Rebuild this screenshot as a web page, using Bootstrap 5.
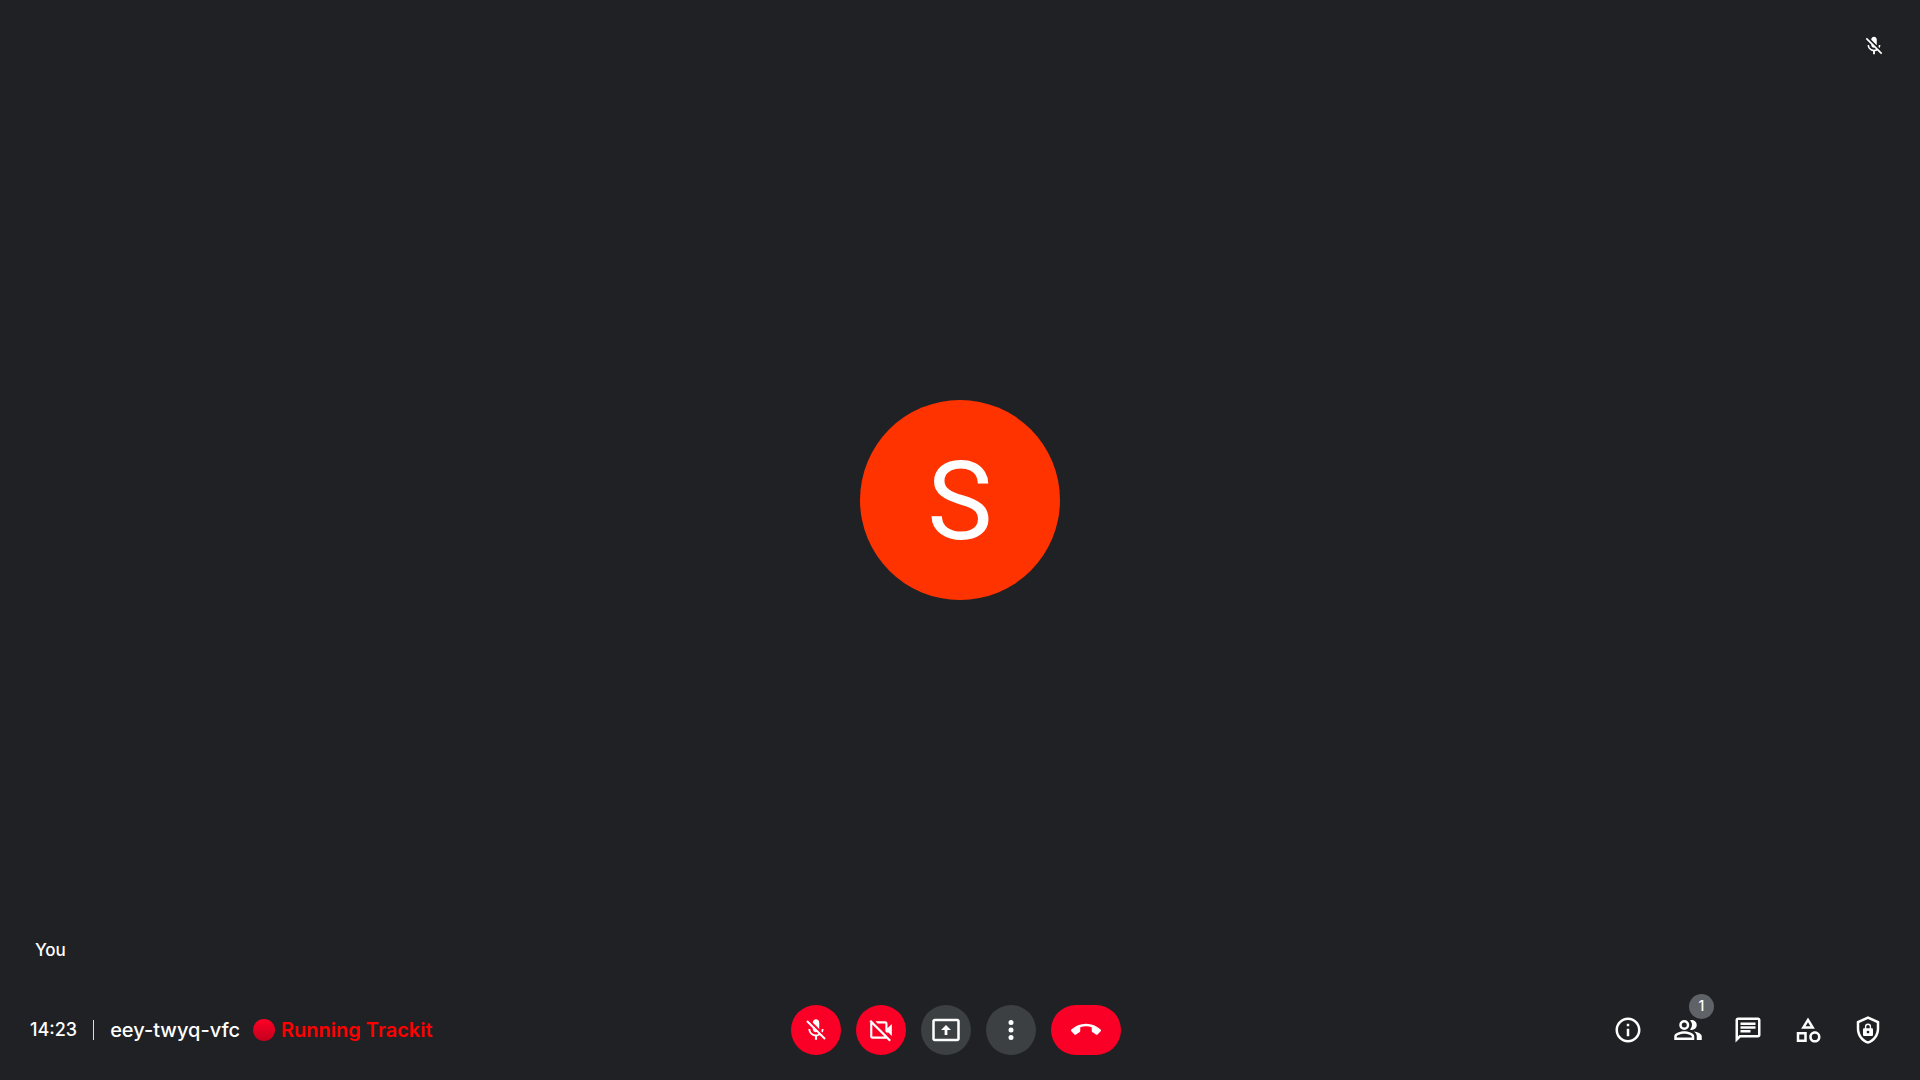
<!DOCTYPE html>
<html lang="en">
<head>
<meta charset="utf-8">
<meta name="viewport" content="width=device-width, initial-scale=1">
<title>Meeting eey-twyq-vfc</title>
<link rel="stylesheet" href="https://cdn.jsdelivr.net/npm/bootstrap@5.3.0/dist/css/bootstrap.min.css">
<style>
  body { background: #202124; color: #fff; font-family: Inter, Roboto, sans-serif; }
  svg { display: block; fill: currentColor; }
  .stage { padding: 20px 35px 0; }
  .self-name { left: 35px; bottom: 18px; font-size: 17px; line-height: 24px; font-weight: 500; }
  .self-muted { right: 35px; top: 35px; }
  .avatar { width: 200px; height: 200px; background: #ff3300; font: 110px/204px Roboto, sans-serif; }
  .controls { height: 100px; padding: 0 30px; }
  .side { flex: 1 1 0; min-width: 0; }
  .meeting-info { font-size: 20px; line-height: 24px; font-weight: 500; white-space: nowrap; }
  .clock { font-size: 18px; }
  .divider { width: 1px; height: 20px; background: #dadce0; margin: 0 16px; }
  .rec-dot { width: 22px; height: 22px; background: linear-gradient(#ff0026, #c4001d); margin: 0 6px 0 13px; }
  .running { color: #f00; font-weight: 600; }
  .call-buttons { gap: 15px; margin-right: 1px; }
  .round-btn { width: 50px; height: 50px; border: 0; border-radius: 25px; padding: 0; background: #3c4043; color: #fff; }
  .round-btn.off { background: #fa0026; }
  .round-btn.leave { width: 70px; }
  .tools { gap: 30px; padding-right: 7px; }
  .tool-btn { width: 30px; height: 30px; border: 0; padding: 0; background: none; color: #fff; }
  .count { left: 16px; top: -21px; width: 25px; height: 25px; background: #5f6368; font-size: 14px; line-height: 24px; font-weight: 500; }
</style>
</head>
<body>
<svg class="d-none" aria-hidden="true">
  <symbol id="mic-off" viewBox="0 0 24 24"><path d="M19 11h-1.700c0 .74-.16 1.430-.43 2.050l1.230 1.230c.56-.98.900-2.090.900-3.280zm-4.020.170c0-.060.020-.110.020-.170V5c0-1.660-1.340-3-3-3S9 3.340 9 5v.180l5.980 5.990zM4.270 3 3 4.270l6.010 6.010V11c0 1.660 1.330 3 2.990 3 .22 0 .44-.030.650-.080l1.660 1.660c-.71.330-1.500.520-2.310.520-2.760 0-5.300-2.100-5.300-5.100H5c0 3.410 2.720 6.230 6 6.720V21h2v-3.280c.910-.130 1.770-.450 2.540-.900L19.730 21 21 19.730 4.270 3z"/></symbol>
</svg>
<div class="d-flex flex-column vh-100">
  <main class="stage position-relative flex-grow-1 d-flex align-items-center justify-content-center">
    <div class="self-muted position-absolute"><svg width="22" height="22" role="img" aria-label="Microphone off"><use href="#mic-off"/></svg></div>
    <div class="avatar rounded-circle text-center">S</div>
    <div class="self-name position-absolute">You</div>
  </main>
  <footer class="controls d-flex align-items-center">
    <div class="side meeting-info d-flex align-items-center">
      <span class="clock">14:23</span><span class="divider"></span><span>eey-twyq-vfc</span>
      <span class="rec-dot rounded-circle"></span><span class="running">Running Trackit</span>
    </div>
    <div class="call-buttons d-flex">
      <button type="button" class="round-btn off d-flex align-items-center justify-content-center" aria-label="Turn on microphone"><svg width="26" height="26"><use href="#mic-off"/></svg></button>
      <button type="button" class="round-btn off d-flex align-items-center justify-content-center" aria-label="Turn on camera"><svg width="26" height="26" viewBox="0 0 24 24"><path d="M18 10.480V6c0-1.100-.9-2-2-2H6.830l2 2H16v7.170l2 2v-1.650l4 3.980v-11l-4 3.980zM16 16 6 6 4 4 2.810 2.810 1.390 4.220l.850.850C2.090 5.350 2 5.660 2 6v12c0 1.100.9 2 2 2h12c.34 0 .65-.090.930-.240l2.850 2.850 1.410-1.410L16 16zM4 18V6.830L15.170 18H4z"/></svg></button>
      <button type="button" class="round-btn d-flex align-items-center justify-content-center" aria-label="Present now"><svg width="30" height="30" viewBox="0 0 24 24"><path d="M21 3H3c-1.110 0-2 .890-2 2v14c0 1.110.890 2 2 2h18c1.110 0 2-.890 2-2V5c0-1.110-.890-2-2-2zm0 16.020H3V4.980h18v14.040zM10.900 12H8l4-4 4 4h-2.900v4h-2.200z"/></svg></button>
      <button type="button" class="round-btn d-flex align-items-center justify-content-center" aria-label="More options"><svg width="30" height="30" viewBox="0 0 24 24"><circle cx="12" cy="6" r="2"/><circle cx="12" cy="12" r="2"/><circle cx="12" cy="18" r="2"/></svg></button>
      <button type="button" class="round-btn off leave d-flex align-items-center justify-content-center" aria-label="Leave call"><svg width="30" height="30" viewBox="0 0 24 24"><path d="M12 9c-1.600 0-3.150.250-4.600.720v3.100c0 .390-.23.740-.56.900-.98.490-1.870 1.120-2.660 1.850-.18.180-.43.280-.7.280-.28 0-.53-.110-.71-.290L.290 13.080c-.18-.170-.29-.420-.29-.700 0-.280.110-.530.290-.710C3.340 8.780 7.460 7 12 7s8.660 1.780 11.710 4.670c.18.180.290.430.290.710 0 .280-.110.530-.290.710l-2.480 2.480c-.18.180-.43.290-.71.290-.27 0-.52-.110-.7-.280-.79-.740-1.690-1.360-2.670-1.850-.33-.160-.56-.500-.56-.900v-3.100C15.150 9.250 13.600 9 12 9z"/></svg></button>
    </div>
    <div class="side tools d-flex align-items-center justify-content-end">
      <button type="button" class="tool-btn" aria-label="Meeting details"><svg width="30" height="30" viewBox="0 0 24 24"><path d="M11 7h2v2h-2zm0 4h2v6h-2zm1-9C6.480 2 2 6.480 2 12s4.480 10 10 10 10-4.480 10-10S17.520 2 12 2zm0 18c-4.410 0-8-3.590-8-8s3.590-8 8-8 8 3.590 8 8-3.590 8-8 8z"/></svg></button>
      <button type="button" class="tool-btn position-relative" aria-label="People"><svg width="30" height="30" viewBox="0 0 24 24"><path fill-rule="evenodd" d="M9 4a4 4 0 1 0 0 8 4 4 0 0 0 0-8zm0 2a2 2 0 1 1 0 4 2 2 0 0 1 0-4zM9 13c-2.670 0-8 1.340-8 4v3h16v-3c0-2.660-5.330-4-8-4zm6 5H3v-.990C3.200 16.290 6.300 15 9 15s5.800 1.290 6 2v1zM15 12a4 4 0 0 0 0-8c-.47 0-.91.100-1.330.240a5.980 5.980 0 0 1 0 7.520c.42.140.86.240 1.330.240zM16.670 13.130C18.040 14.060 19 15.320 19 17v3h4v-3c0-2.180-3.570-3.470-6.330-3.870z"/></svg><span class="count position-absolute rounded-circle text-center">1</span></button>
      <button type="button" class="tool-btn" aria-label="Chat"><svg width="30" height="30" viewBox="0 0 24 24"><path d="M4 4h16v12H5.170L4 17.170V4m0-2c-1.100 0-1.990.9-1.990 2L2 22l4-4h14c1.100 0 2-.9 2-2V4c0-1.100-.9-2-2-2H4zm2 10h8v2H6v-2zm0-3h12v2H6V9zm0-3h12v2H6V6z"/></svg></button>
      <button type="button" class="tool-btn" aria-label="Activities"><svg width="30" height="30" viewBox="0 0 24 24"><path d="m12 2-5.500 9h11L12 2zm0 3.840L13.930 9h-3.870L12 5.840zM17.500 13c-2.490 0-4.500 2.010-4.500 4.500s2.010 4.500 4.500 4.500 4.500-2.010 4.500-4.500-2.010-4.500-4.500-4.500zm0 7a2.500 2.500 0 0 1 0-5 2.500 2.500 0 0 1 0 5zM3 21.500h8v-8H3v8zm2-6h4v4H5v-4z"/></svg></button>
      <button type="button" class="tool-btn" aria-label="Host controls"><svg width="30" height="30" viewBox="0 0 24 24"><path fill-rule="evenodd" d="M12 1 3 5v6c0 5.550 3.840 10.740 9 12 5.160-1.260 9-6.450 9-12V5l-9-4zm7 10c0 4.520-2.980 8.690-7 9.930-4.020-1.240-7-5.410-7-9.930V6.300l7-3.110 7 3.110V11z"/><path fill-rule="evenodd" d="M15 10.500h-.5V9.300a2.500 2.500 0 0 0-5 0v1.200H9c-.55 0-1 .45-1 1v4.200c0 .55.45 1 1 1h6c.55 0 1-.45 1-1v-4.200c0-.55-.45-1-1-1zm-4.400-1.200a1.400 1.400 0 0 1 2.800 0v1.200h-2.800V9.300zM12 14.700a1.100 1.100 0 1 1 0-2.200 1.100 1.100 0 0 1 0 2.200z"/></svg></button>
    </div>
  </footer>
</div>
<script src="https://cdn.jsdelivr.net/npm/bootstrap@5.3.0/dist/js/bootstrap.bundle.min.js"></script>
</body>
</html>
